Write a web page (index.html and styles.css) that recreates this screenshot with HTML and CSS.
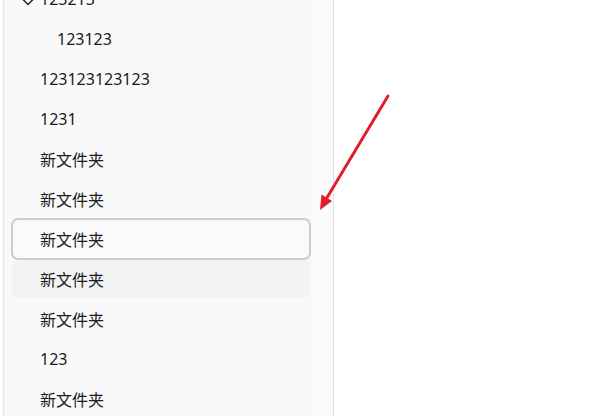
FILE: index.html
```html
<!DOCTYPE html>
<html lang="zh">
<head>
<meta charset="utf-8">
<link rel="stylesheet" href="styles.css">
</head>
<body>
<div class="page">
  <aside class="sidebar">
    <div class="list">
      <div class="row row-parent">
        <svg class="chev" width="12" height="8" viewBox="0 0 12 8"><polyline points="1,1.5 6,6.5 11,1.5" fill="none" stroke="#222" stroke-width="1.5"/></svg>
        <span>123213</span>
      </div>
      <div class="row row-child">123123</div>
      <div class="row">123123123123</div>
      <div class="row">1231</div>
      <div class="row">新文件夹</div>
      <div class="row">新文件夹</div>
      <div class="row row-selected">新文件夹</div>
      <div class="row row-hover">新文件夹</div>
      <div class="row">新文件夹</div>
      <div class="row">123</div>
      <div class="row">新文件夹</div>
    </div>
    <div class="track"></div>
  </aside>
  <main class="content"></main>
</div>
<svg class="arrow" width="597" height="416" viewBox="0 0 597 416">
  <line x1="388" y1="96" x2="326.5" y2="198.5" stroke="#e31d29" stroke-width="3" stroke-linecap="round"/>
  <polygon points="320,210 332,201 321.5,194.5" fill="#e31d29"/>
</svg>
</body>
</html>
```
FILE: styles.css
```css
html, body {
  margin: 0;
  padding: 0;
  background: #ffffff;
  height: 100%;
  overflow: hidden;
}
.page {
  display: flex;
  height: 416px;
  padding-left: 3px;
}
.sidebar {
  display: flex;
  width: 329px;
  border-left: 1px solid #e6e6e6;
  border-right: 1px solid #e2e2e2;
  background: #f9f9f9;
  overflow: hidden;
}
.list {
  width: 314px;
  padding: 0 8px;
  box-sizing: border-box;
  margin-top: -21px;
  display: flex;
  flex-direction: column;
  flex-shrink: 0;
}
.track {
  flex: 1;
  background: #fbfbfb;
}
.row {
  height: 40px;
  display: flex;
  align-items: center;
  padding-left: 28px;
  box-sizing: border-box;
  font-family: "Noto Sans", "Noto Sans CJK SC", sans-serif;
  font-size: 16px;
  color: #1b1b1b;
  border-radius: 6px;
  flex-shrink: 0;
}
.row-parent {
  position: relative;
}
.chev {
  position: absolute;
  left: 10px;
  top: 19px;
}
.row-child {
  padding-left: 45px;
}
.row-selected {
  height: 42px;
  margin: -1px -1px;
  padding-left: 27px;
  border: 2px solid #cdcdcd;
  border-radius: 7px;
  background: #fafafa;
}
.row-hover {
  height: 38px;
  margin: 1px 0;
  background: #f3f3f3;
}
.content {
  flex: 1;
  background: #ffffff;
}
.arrow {
  position: absolute;
  left: 0;
  top: 0;
  pointer-events: none;
}
```
